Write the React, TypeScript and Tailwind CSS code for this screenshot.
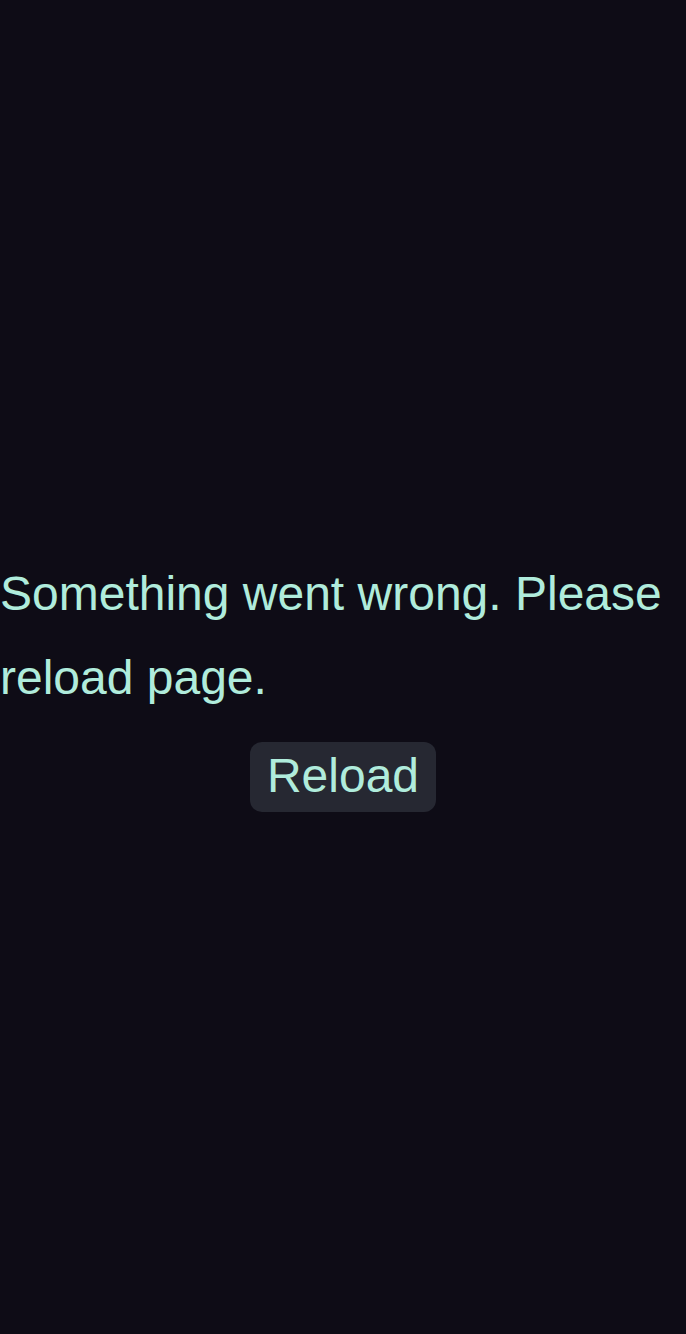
export default function App() {
  return (
    <div className="min-h-screen bg-[#0e0c16] flex flex-col justify-center pt-[30px] font-['Liberation_Sans',Arial,sans-serif] text-[#b0ecdc]">
      <p className="text-[48px] leading-[84px] text-left">
        Something went wrong. Please reload page.
      </p>
      <div className="flex justify-center mt-[22px]">
        <button
          onClick={() => window.location.reload()}
          className="h-[70px] px-[17px] pb-[2px] rounded-[12px] bg-[#262832] text-[48px] leading-none text-[#b0ecdc]"
        >
          Reload
        </button>
      </div>
    </div>
  );
}
